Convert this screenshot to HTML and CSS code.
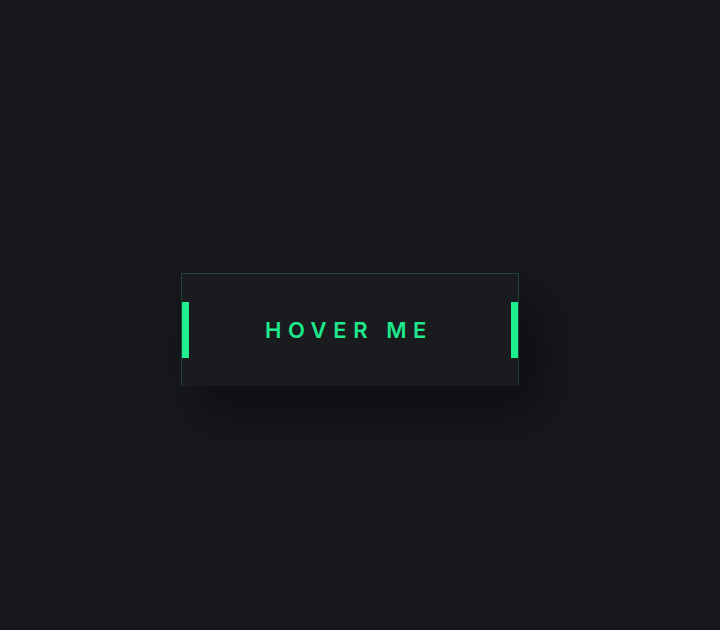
FILE: index.html
```html
<!DOCTYPE html>
<html>
<head>
<meta charset="utf-8">
<link rel="stylesheet" href="styles.css">
</head>
<body>
<main class="stage">
  <button class="glow-btn" type="button">
    <span class="bar bar-left"></span>
    <span class="label">HOVER ME</span>
    <span class="bar bar-right"></span>
  </button>
</main>
</body>
</html>
```

FILE: styles.css
```css
html, body {
  margin: 0;
  padding: 0;
  background: #17181c;
}
.stage {
  height: 630px;
  box-sizing: border-box;
  padding: 273px 0 0 181px;
}
.glow-btn {
  position: relative;
  display: flex;
  align-items: center;
  justify-content: center;
  box-sizing: border-box;
  width: 338px;
  height: 113px;
  margin: 0;
  padding: 0;
  background: #1a1b1f;
  border: 1px solid #1c4536;
  border-bottom-color: #1a1b1f;
  box-shadow: 20px 26px 48px rgba(0, 0, 0, 0.42);
  cursor: pointer;
}
.label {
  font-family: "Inter", "Lato", sans-serif;
  font-weight: 600;
  font-size: 22px;
  letter-spacing: 6.6px;
  padding-left: 6px;
  margin-left: -8px;
  color: #1ee98d;
}
.bar {
  position: absolute;
  top: 28px;
  width: 7px;
  height: 56px;
  background: #1ef08f;
}
.bar-left { left: 0; }
.bar-right { right: 0; }
```
